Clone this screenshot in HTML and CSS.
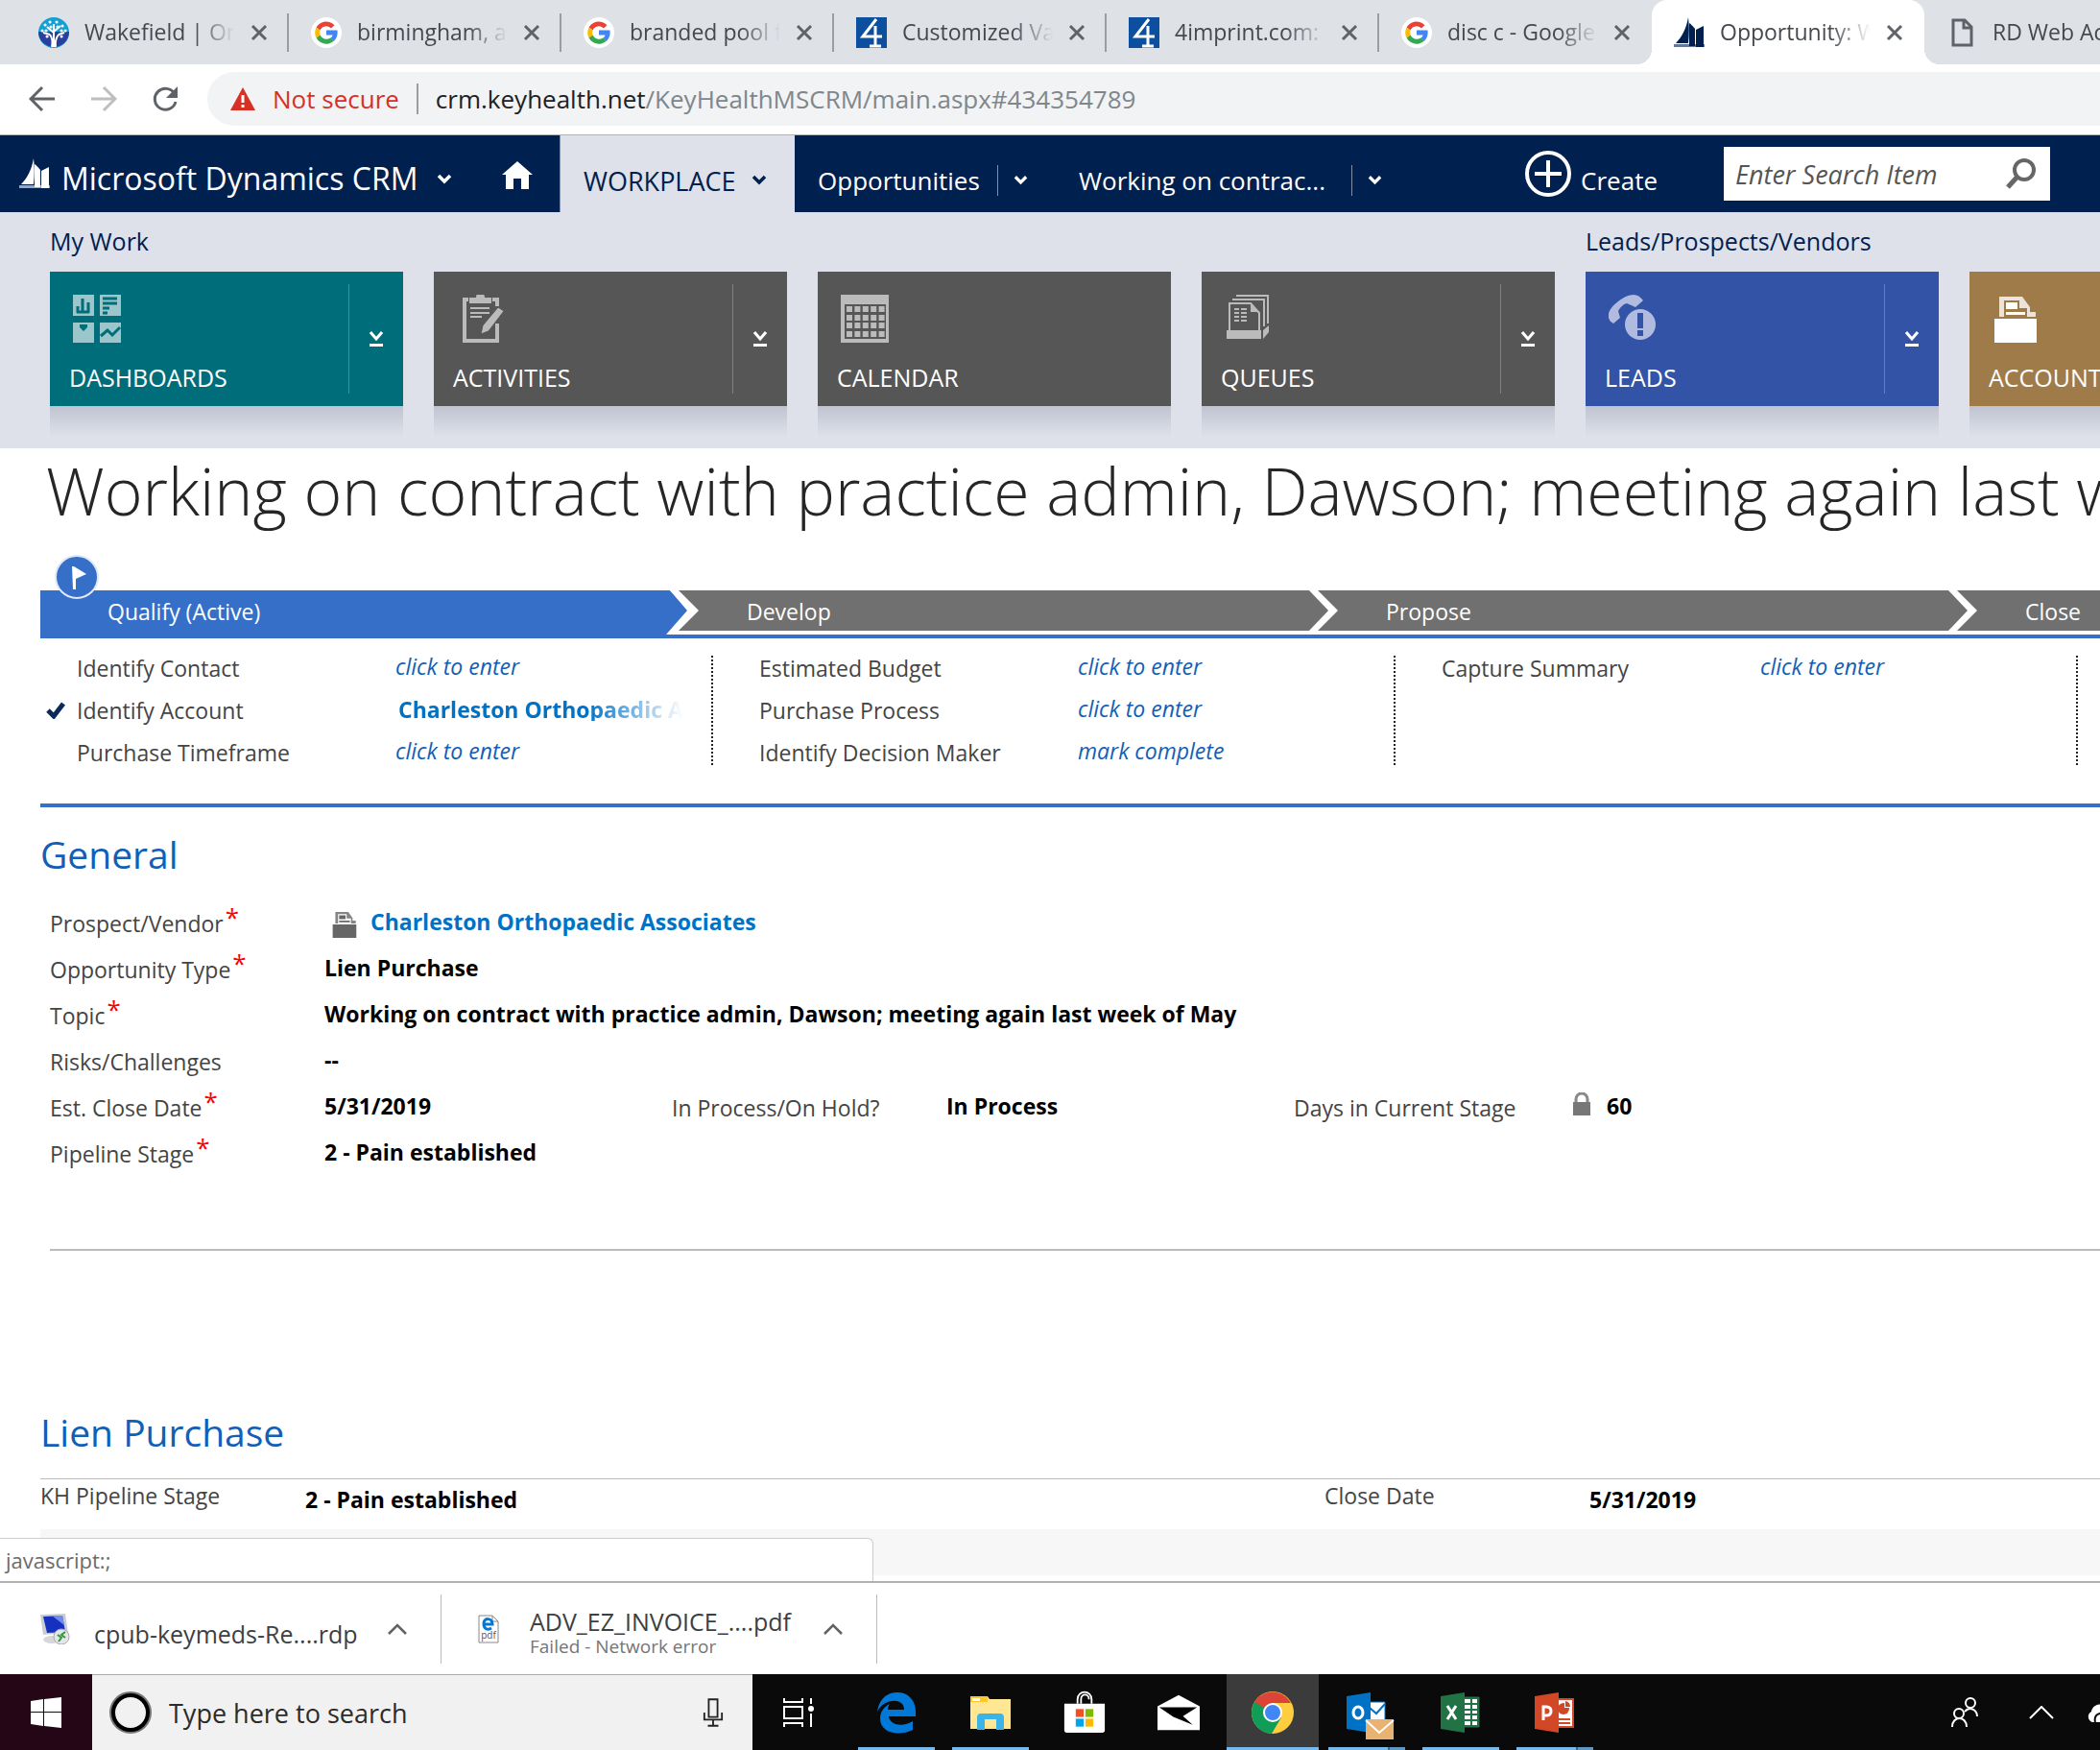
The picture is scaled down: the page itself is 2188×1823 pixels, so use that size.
FILE: index.html
```html
<!DOCTYPE html>
<html lang="en">
<head>
    <meta charset="UTF-8">
    <meta name="viewport" content="width=device-width, initial-scale=1.0">
    <title>Opportunity: Working on contract</title>
    <link rel="stylesheet" href="styles.css">
</head>
<body>
    <!-- shared icons -->
    <svg class="sprite" aria-hidden="true">
        <symbol id="google" viewBox="0 0 32 32">
            <circle cx="16" cy="16" r="16" fill="#fff"/>
            <path d="M24.500 8.200A11.800 11.800 0 0 0 5.600 10.500l4 3.100A6.900 6.900 0 0 1 21 11.500z" fill="#ea4335"/>
            <path d="M5.600 10.500a11.800 11.800 0 0 0 0 11l4-3.100a6.900 6.900 0 0 1 0-4.800z" fill="#fbbc05"/>
            <path d="M5.600 21.500a11.800 11.800 0 0 0 18.400 3l-3.900-3a6.900 6.900 0 0 1-10.500-3.100z" fill="#34a853"/>
            <path d="M16 13.600v4.800h6.600a6 6 0 0 1-2.500 3.300l3.900 3c2.700-2.500 4.200-6.300 3.500-11.100z" fill="#4285f4"/>
        </symbol>
        <symbol id="sails" viewBox="0 0 32 32">
            <path d="M15 0c1 8 1 18 0 27H2C8 21 13 12 15 0z"/>
            <path d="M16 6c4 3 6 6 6 6v18h-6z"/>
            <path d="M23 13l8-4v22h-8z"/>
            <path d="M0 28h32v3H0z" opacity=".6"/>
        </symbol>
        <symbol id="close" viewBox="0 0 18 18">
            <path d="M2 2l14 14M16 2L2 16" fill="none" stroke="#5f6368" stroke-width="3"/>
        </symbol>
        <symbol id="chev" viewBox="0 0 16 12">
            <path d="M2 2l6 6 6-6" fill="none" stroke="currentColor" stroke-width="3.500"/>
        </symbol>
        <symbol id="up" viewBox="0 0 20 12">
            <path d="M1 11l9-9 9 9" fill="none" stroke="currentColor" stroke-width="2.500"/>
        </symbol>
        <symbol id="drop" viewBox="0 0 14 16">
            <path d="M1 1l6 7 6-7" fill="none" stroke="#fff" stroke-width="3"/>
            <path d="M0 13h14v3H0z" fill="#fff"/>
        </symbol>
        <symbol id="account" viewBox="0 0 50 50">
            <path d="M7 23V2h24l8 11v5h6v5z" fill="currentColor" opacity=".8"/>
            <path d="M12 6h16v8h8v9H12z" fill="var(--paper)"/>
            <path d="M14 8h12v7H14zM14 18h20v3H14z" fill="currentColor"/>
            <path d="M2 25h44v25H2z" fill="currentColor"/>
        </symbol>
        <symbol id="four" viewBox="0 0 32 32">
            <path d="M0 0h32v32H0z" fill="#0b4f9e"/>
            <path d="M21 2L7 20h20M20 9v21M14 30h12" fill="none" stroke="#fff" stroke-width="3"/>
        </symbol>
    </svg>

    <nav class="tabs">
        <div class="tab">
            <svg class="favicon" viewBox="0 0 32 32">
                <circle cx="16" cy="16" r="16" fill="#129fd4"/>
                <path d="M0 15h32a16 16 0 0 1-32 0z" fill="#2a3f9d"/>
                <path d="M14 31c1-5 1-9-2-13M18 31c-1-6 0-9 3-13M16 31V7M16 16l-7-6M16 15l7-6M12 18l-7-2M21 18l6-2" fill="none" stroke="#fff" stroke-width="2"/>
                <path d="M7 8h.1M12 5h.1M19 5h.1M25 9h.1M4 14h.1M28 14h.1M8 14h.1M24 14h.1M13 10h.1M20 10h.1M9 20h.1M24 20h.1" stroke="#fff" stroke-width="3" stroke-linecap="round"/>
            </svg>
            <span class="tab-title">Wakefield | Ort</span>
            <button class="tab-close" aria-label="Close"><svg><use href="#close"/></svg></button>
        </div>
        <div class="tab">
            <svg class="favicon"><use href="#google"/></svg>
            <span class="tab-title">birmingham, al</span>
            <button class="tab-close" aria-label="Close"><svg><use href="#close"/></svg></button>
        </div>
        <div class="tab">
            <svg class="favicon"><use href="#google"/></svg>
            <span class="tab-title">branded pool f</span>
            <button class="tab-close" aria-label="Close"><svg><use href="#close"/></svg></button>
        </div>
        <div class="tab">
            <svg class="favicon"><use href="#four"/></svg>
            <span class="tab-title">Customized Va</span>
            <button class="tab-close" aria-label="Close"><svg><use href="#close"/></svg></button>
        </div>
        <div class="tab">
            <svg class="favicon"><use href="#four"/></svg>
            <span class="tab-title">4imprint.com: I</span>
            <button class="tab-close" aria-label="Close"><svg><use href="#close"/></svg></button>
        </div>
        <div class="tab no-line">
            <svg class="favicon"><use href="#google"/></svg>
            <span class="tab-title">disc c - Google</span>
            <button class="tab-close" aria-label="Close"><svg><use href="#close"/></svg></button>
        </div>
        <div class="tab active">
            <svg class="favicon sails"><use href="#sails"/></svg>
            <span class="tab-title">Opportunity: W</span>
            <button class="tab-close" aria-label="Close"><svg><use href="#close"/></svg></button>
        </div>
        <div class="tab">
            <svg class="favicon" viewBox="0 0 32 32">
                <path d="M7 3h12l7 7v19H7zM18 3v8h8" fill="none" stroke="#5f6368" stroke-width="3"/>
            </svg>
            <span class="tab-title">RD Web Acc</span>
        </div>
    </nav>

    <div class="toolbar">
        <button class="tool" aria-label="Back">
            <svg viewBox="0 0 28 28"><path d="M27 14H3M14 2L2 14l12 12" fill="none" stroke="#5f6368" stroke-width="3"/></svg>
        </button>
        <button class="tool" aria-label="Forward">
            <svg viewBox="0 0 28 28"><path d="M1 14h24M14 2l12 12-12 12" fill="none" stroke="#bdbec0" stroke-width="3"/></svg>
        </button>
        <button class="tool" aria-label="Reload">
            <svg viewBox="0 0 28 28"><path d="M24 9a11 11 0 1 0 1 8" fill="none" stroke="#5f6368" stroke-width="3"/><path d="M27 1v12H15z" fill="#5f6368"/></svg>
        </button>
        <div class="address">
            <svg class="warning" viewBox="0 0 26 24"><path d="M13 0l13 24H0z" fill="#d93025"/><path d="M13 8v8M13 18v3" stroke="#fff" stroke-width="3"/></svg>
            <span class="not-secure">Not secure</span>
            <span class="url" role="textbox" aria-label="Address" contenteditable="true" spellcheck="false">crm.keyhealth.net<span class="url-path">/KeyHealthMSCRM/main.aspx#434354789</span></span>
        </div>
    </div>

    <header class="crm-nav">
        <button class="brand">
            <svg class="brand-logo"><use href="#sails"/></svg>
            <span>Microsoft Dynamics CRM</span>
            <svg class="chev"><use href="#chev"/></svg>
        </button>
        <a class="home" href="#" aria-label="Home">
            <svg viewBox="0 0 32 30"><path d="M16 0l16 14h-4v15h-8V18h-8v11H4V14H0z" fill="#fff"/></svg>
        </a>
        <button class="nav-item current">WORKPLACE <svg class="chev"><use href="#chev"/></svg></button>
        <button class="nav-item">Opportunities <svg class="chev split"><use href="#chev"/></svg></button>
        <button class="nav-item record">Working on contrac... <svg class="chev split"><use href="#chev"/></svg></button>
        <button class="create">
            <svg viewBox="0 0 48 48"><circle cx="24" cy="24" r="22" fill="none" stroke="#fff" stroke-width="4"/><path d="M24 10v28M10 24h28" stroke="#fff" stroke-width="4"/></svg>
            <span>Create</span>
        </button>
        <div class="search">
            <input type="text" placeholder="Enter Search Item" aria-label="Search">
            <button aria-label="Go">
                <svg viewBox="0 0 32 32"><circle cx="19" cy="12" r="10" fill="none" stroke="#666" stroke-width="4"/><path d="M12 19L2 30" stroke="#666" stroke-width="5"/></svg>
            </button>
        </div>
    </header>

    <section class="tiles">
        <div class="tile-group">
            <h3>My Work</h3>
            <div class="tile-row">
                <a class="tile teal" href="#">
                    <svg class="tile-icon" viewBox="0 0 50 50">
                        <path d="M0 0h22v22H0zM28 0h22v22H28zM0 29h22v21H0zM28 29h22v21H28z" fill="#9bc6cb"/>
                        <path d="M5 12v7M10 4v15M16 8v11M4 18h13M31 4h15M31 9h15M31 14h7M31 19h5M29 43l7-6 5 5 8-8" fill="none" stroke="#006d7b" stroke-width="3"/>
                        <path d="M7 31h8v3l-4 4-4-4z" fill="#006d7b"/>
                    </svg>
                    <span class="tile-name">DASHBOARDS</span>
                    <span class="tile-drop"><svg><use href="#drop"/></svg></span>
                </a>
                <a class="tile" href="#">
                    <svg class="tile-icon" viewBox="0 0 50 50">
                        <path d="M12 5H8v43h34V30M42 12V5h-5" fill="none" stroke="#bbb" stroke-width="4"/>
                        <path d="M13 9V3h7c0-7 9-7 9 0h7v6z" fill="#bbb"/>
                        <path d="M14 14h20M14 19h20M14 23h12" stroke="#bbb" stroke-width="2"/>
                        <path d="M43 13l6 4-16 21-8 3 2-9z" fill="#bbb" stroke="#565656" stroke-width="1"/>
                    </svg>
                    <span class="tile-name">ACTIVITIES</span>
                    <span class="tile-drop"><svg><use href="#drop"/></svg></span>
                </a>
                <a class="tile" href="#">
                    <svg class="tile-icon" viewBox="0 0 50 50">
                        <path d="M0 0h51v50H0z" fill="#bbb"/>
                        <path d="M4 10h43v36H4z" fill="#565656"/>
                        <path d="M6 15h40M6 24h40M6 32h40M6 41h40" stroke="#bbb" stroke-width="6" stroke-dasharray="6 2.400"/>
                    </svg>
                    <span class="tile-name">CALENDAR</span>
                </a>
                <a class="tile" href="#">
                    <svg class="tile-icon" viewBox="0 0 50 50">
                        <path d="M12 1h33v29M8 5h33v28" fill="none" stroke="#bbb" stroke-width="2"/>
                        <path d="M5 37V9h22l9 10v18" fill="none" stroke="#bbb" stroke-width="2"/>
                        <path d="M27 8v10h9z" fill="#bbb"/>
                        <path d="M10 15h5M17 15h6M10 19h5M17 19h6M10 23h5M17 23h6M10 27h5M17 27h6" stroke="#bbb" stroke-width="2"/>
                        <path d="M2 37h36v9H2zM40 37l6-5v7l-6 7z" fill="#bbb"/>
                    </svg>
                    <span class="tile-name">QUEUES</span>
                    <span class="tile-drop"><svg><use href="#drop"/></svg></span>
                </a>
            </div>
        </div>
        <div class="tile-group">
            <h3>Leads/Prospects/Vendors</h3>
            <div class="tile-row">
                <a class="tile blue" href="#">
                    <svg class="tile-icon" viewBox="0 0 50 50">
                        <path d="M5 30C1 28-1 24 0 20 2 11 17 0 26 0c4 0 7 2 10 6l-8 7-9-4c-4 1-7 4-9 8l2 7z" fill="#b0bbdf"/>
                        <circle cx="33" cy="31" r="16" fill="#b0bbdf"/>
                        <path d="M33 19v16M33 37v6" stroke="#3353a6" stroke-width="6"/>
                    </svg>
                    <span class="tile-name">LEADS</span>
                    <span class="tile-drop"><svg><use href="#drop"/></svg></span>
                </a>
                <a class="tile gold" href="#">
                    <svg class="tile-icon"><use href="#account"/></svg>
                    <span class="tile-name">ACCOUNTS</span>
                    <span class="tile-drop"><svg><use href="#drop"/></svg></span>
                </a>
            </div>
        </div>
    </section>

    <main class="record-page">
        <h1>Working on contract with practice admin, Dawson; meeting again last week of May</h1>

        <div class="process">
            <div class="flag">
                <svg viewBox="0 0 46 46"><circle cx="23" cy="23" r="22" fill="#356fc8" stroke="#dfe8f6" stroke-width="2"/><path d="M18 12h2l13 8-11 5v11h-3z" fill="#fff"/></svg>
            </div>
            <div class="stages">
                <div class="stage now">Qualify (Active)</div>
                <svg class="arrow first" viewBox="0 0 30 46"><path d="M8 0h22v42H8z" fill="#707070"/><path d="M0 0l20 21L0 46z" fill="#356fc8"/><path d="M0 0h9l21 21L9 42h21v4H-4L18 21z" fill="#fff"/></svg>
                <div class="stage">Develop</div>
                <svg class="arrow" viewBox="0 0 30 42"><path d="M0 0h30v42H0z" fill="#707070"/><path d="M0 0h9l21 21L9 42H0l20-21z" fill="#fff"/></svg>
                <div class="stage">Propose</div>
                <svg class="arrow" viewBox="0 0 30 42"><path d="M0 0h30v42H0z" fill="#707070"/><path d="M0 0h9l21 21L9 42H0l20-21z" fill="#fff"/></svg>
                <div class="stage">Close</div>
            </div>
            <div class="steps">
                <dl class="step-col">
                    <dt>Identify Contact</dt><dd><button>click to enter</button></dd>
                    <dt class="done"><svg class="check" viewBox="0 0 20 18"><path d="M2 9l6 6L18 2" fill="none" stroke="#0a2a5c" stroke-width="5"/></svg>Identify Account</dt><dd><a class="lookup" href="#">Charleston Orthopaedic As</a></dd>
                    <dt>Purchase Timeframe</dt><dd><button>click to enter</button></dd>
                </dl>
                <dl class="step-col">
                    <dt>Estimated Budget</dt><dd><button>click to enter</button></dd>
                    <dt>Purchase Process</dt><dd><button>click to enter</button></dd>
                    <dt>Identify Decision Maker</dt><dd><button>mark complete</button></dd>
                </dl>
                <dl class="step-col">
                    <dt>Capture Summary</dt><dd><button>click to enter</button></dd>
                </dl>
            </div>
        </div>

        <h2>General</h2>
        <dl class="fields">
            <div class="field"><dt>Prospect/Vendor<i>*</i></dt><dd class="with-icon"><svg class="account-icon"><use href="#account"/></svg><a href="#">Charleston Orthopaedic Associates</a></dd></div>
            <div class="field"><dt>Opportunity Type<i>*</i></dt><dd>Lien Purchase</dd></div>
            <div class="field"><dt>Topic<i>*</i></dt><dd>Working on contract with practice admin, Dawson; meeting again last week of May</dd></div>
            <div class="field"><dt>Risks/Challenges</dt><dd>--</dd></div>
            <div class="field">
                <dt>Est. Close Date<i>*</i></dt><dd>5/31/2019</dd>
                <dt>In Process/On Hold?</dt><dd>In Process</dd>
                <dt>Days in Current Stage</dt><dd class="locked"><svg class="lock" viewBox="0 0 20 24"><path d="M4 10V7a6 6 0 0 1 12 0v3" fill="none" stroke="#888" stroke-width="3"/><path d="M1 10h18v14H1z" fill="#777"/></svg>60</dd>
            </div>
            <div class="field"><dt>Pipeline Stage<i>*</i></dt><dd>2 - Pain established</dd></div>
        </dl>
        <hr>

        <h2 class="lien">Lien Purchase</h2>
        <dl class="lien-row">
            <dt>KH Pipeline Stage</dt><dd>2 - Pain established</dd>
            <dt>Close Date</dt><dd>5/31/2019</dd>
        </dl>
        <div class="strip"></div>
        <div class="status">javascript:;</div>
    </main>

    <div class="downloads">
        <div class="download">
            <svg class="file-icon" viewBox="0 0 32 32">
                <path d="M0 1l26-1 3 20-26 2z" fill="#c9ccd2"/>
                <path d="M3 3l20-1 3 17-19 1z" fill="#1630c0"/>
                <path d="M12 2l11 0 2 10z" fill="#6f8bf0"/>
                <ellipse cx="12" cy="27" rx="9" ry="4" fill="#d5d7da"/>
                <circle cx="22" cy="24" r="8" fill="#e4e6e8" stroke="#aaa"/>
                <path d="M18 22l4 3-3 4M26 19l-4 3 4 3" fill="none" stroke="#2f9a3a" stroke-width="2"/>
            </svg>
            <div class="file-name single">cpub-keymeds-Re....rdp</div>
            <button aria-label="More"><svg><use href="#up"/></svg></button>
        </div>
        <div class="download">
            <svg class="file-icon" viewBox="0 0 32 32">
                <path d="M6 2h14l6 6v22H6z" fill="#fff" stroke="#888"/>
                <path d="M20 2v6h6" fill="none" stroke="#888"/>
                <path d="M11 11h9c0-7-9-7-9-1 0 7 5 7 8 5" fill="none" stroke="#0078d7" stroke-width="3"/>
                <text x="16" y="26" class="icon-pdf">pdf</text>
            </svg>
            <div class="file-name">ADV_EZ_INVOICE_....pdf<small>Failed - Network error</small></div>
            <button aria-label="More"><svg><use href="#up"/></svg></button>
        </div>
    </div>

    <footer class="taskbar">
        <button class="start" aria-label="Start">
            <svg viewBox="0 0 32 32"><path d="M0 4l13-2v13H0zM14 2l18-2v15H14zM0 16h13v14L0 28zM14 16h18v16l-18-2z" fill="#fff"/></svg>
        </button>
        <div class="cortana">
            <svg class="ring" viewBox="0 0 44 44"><circle cx="22" cy="22" r="20" fill="none" stroke="#777" stroke-width="4"/><circle cx="22" cy="22" r="18" fill="none" stroke="#000" stroke-width="4"/></svg>
            <input type="text" placeholder="Type here to search" aria-label="Type here to search">
            <svg class="mic" viewBox="0 0 24 32"><path d="M7 1h10v20H7zM2 16v8h20v-8M12 24v7M6 31h12" fill="none" stroke="#222" stroke-width="2"/></svg>
        </div>
        <button class="app view" aria-label="Task view">
            <svg viewBox="0 0 32 32"><path d="M1 1v4h19V1M1 10h19v12H1zM1 31v-4h19v4M29 1v6M29 17v14" fill="none" stroke="#fff" stroke-width="2"/><circle cx="29" cy="12" r="3" fill="#fff"/></svg>
        </button>
        <button class="app open" aria-label="Edge">
            <svg viewBox="0 0 44 44"><path d="M2 21C4 8 12 1 23 1c12 0 19 9 19 20v5H14c1 10 16 11 25 5v9C25 47 5 44 5 28c0-7 4-12 10-15-2 3-2 5-2 6h17c0-13-21-12-28 2z" fill="#0078d7"/></svg>
        </button>
        <button class="app open" aria-label="File Explorer">
            <svg viewBox="0 0 44 44"><path d="M1 5h18l2 3h22v31H1z" fill="#ffe794"/><path d="M1 5h18v6H1z" fill="#fcc62c"/><path d="M3 7h8v3H3z" fill="#fff"/><path d="M8 40V27q0-4 4-4h20q4 0 4 4v13h-8V29H16v11z" fill="#3db4e8"/></svg>
        </button>
        <button class="app" aria-label="Store">
            <svg viewBox="0 0 48 48"><path d="M16 14V9c0-11 16-11 16 0v5M20 14V9c0-7 9-7 9 0" fill="none" stroke="#fff" stroke-width="2"/><path d="M1 14h46v30q0 3-3 3H4q-3 0-3-3z" fill="#fff"/><path d="M14 20h9v9h-9z" fill="#f25022"/><path d="M25 20h9v9h-9z" fill="#7fba00"/><path d="M14 31h9v9h-9z" fill="#00a4ef"/><path d="M25 31h9v9h-9z" fill="#ffb900"/></svg>
        </button>
        <button class="app" aria-label="Mail">
            <svg viewBox="0 0 48 44"><path d="M0 15L24 2l24 13v27H0z" fill="#fff"/><path d="M2 16h43L29 26l11 10-22-9z" fill="#000"/></svg>
        </button>
        <button class="app open focused" aria-label="Chrome">
            <svg viewBox="0 0 44 44"><circle cx="22" cy="22" r="22" fill="#ffcd40"/><path d="M22 12h19A22 22 0 0 0 3 11l9 16z" fill="#db4437"/><path d="M3 11a22 22 0 0 0 18 33l10-17-9-5z" fill="#0f9d58"/><path d="M3 11l10 16 9-5v-10z" fill="#db4437" opacity=".01"/><circle cx="22" cy="22" r="10" fill="#fff"/><circle cx="22" cy="22" r="8" fill="#4285f4"/></svg>
        </button>
        <button class="app open many" aria-label="Outlook">
            <svg viewBox="0 0 44 44"><path d="M24 11h17v20H24z" fill="#fff" stroke="#0072c6" stroke-width="1"/><path d="M25 17l7 6 9-10" fill="none" stroke="#0072c6" stroke-width="2"/><path d="M1 5l25-4v42L1 39z" fill="#0072c6"/><ellipse cx="13" cy="22" rx="5" ry="6" fill="none" stroke="#fff" stroke-width="3"/><path d="M21 29h29v21H21z" fill="#e8b272"/><path d="M21 30l14 13 15-13" fill="none" stroke="#fff" stroke-width="2"/></svg>
        </button>
        <button class="app open" aria-label="Excel">
            <svg viewBox="0 0 44 44"><path d="M24 6h17v31H24z" fill="#fff" stroke="#217346" stroke-width="1"/><path d="M25 13h14M25 19h14M25 24h14M25 30h14M33 7v29M25 7h15v29H25" fill="none" stroke="#217346" stroke-width="2"/><path d="M1 5l25-4v42L1 39z" fill="#217346"/><path d="M8 15l9 14M17 15L8 29" stroke="#fff" stroke-width="3"/></svg>
        </button>
        <button class="app open many" aria-label="PowerPoint">
            <svg viewBox="0 0 44 44"><path d="M24 8h17v29H24z" fill="#fff" stroke="#d24726" stroke-width="2"/><circle cx="31" cy="18" r="6" fill="#d24726"/><path d="M32 17V9h7v8z" fill="#fff"/><path d="M33 16v-6q5 1 5 6zM26 28h12v2H26zM26 32h12v2H26z" fill="#d24726"/><path d="M1 5l25-4v42L1 39z" fill="#d24726"/><path d="M10 30V16h3q5 0 5 4.500T13 25h-3" fill="none" stroke="#fff" stroke-width="3"/></svg>
        </button>
        <div class="tray">
            <svg class="people" viewBox="0 0 28 32"><circle cx="20" cy="6" r="5"/><circle cx="8" cy="17" r="5"/><path d="M1 31c0-12 15-12 15 0M14 15c5-6 13-2 13 5"/></svg>
            <svg class="tray-up" viewBox="0 0 26 14"><path d="M1 13L13 1l12 12"/></svg>
            <svg class="cloud" viewBox="0 0 40 20"><path d="M6 20a6 6 0 0 1-1-11C6 2 15-1 19 4c8-3 12 3 12 7 8 0 8 9 2 9z" fill="#fff"/><path d="M9 20c-2-9 7-11 10-7" fill="none" stroke="#0a0a0a" stroke-width="2"/></svg>
        </div>
    </footer>
</body>
</html>
```

FILE: styles.css
```css
* {
    box-sizing: border-box;
}
html {
    overflow: hidden;
}
body {
    margin: 0;
    height: 100vh;
    display: flex;
    flex-direction: column;
    overflow: hidden;
    background: #fff;
    color: #444;
    font-family: "Open Sans", "Noto Sans", sans-serif;
    font-size: 23px;
}
h1, h2, h3, dl, dt, dd {
    margin: 0;
    font-weight: normal;
}
a {
    text-decoration: none;
}
button {
    padding: 0;
    border: none;
    background: none;
    color: inherit;
    font: inherit;
    cursor: pointer;
}
input {
    border: none;
    background: none;
    font: inherit;
    outline: none;
}
svg {
    display: block;
    flex: none;
}
.sprite {
    position: absolute;
    width: 0;
    height: 0;
}

/* browser tabs */
.tabs {
    flex: none;
    display: flex;
    height: 67px;
    padding-left: 17px;
    overflow: hidden;
    background: #dee1e6;
}
.tab {
    flex: none;
    display: flex;
    align-items: center;
    width: 284px;
    padding-left: 23px;
    background: linear-gradient(#9a9da2, #9a9da2) right center / 2px 40px no-repeat;
}
.tab.no-line,
.tab:last-child {
    background: none;
}
.tab.active {
    position: relative;
    background: #fff;
    border-radius: 16px 16px 0 0;
}
.tab.active::before,
.tab.active::after {
    content: "";
    position: absolute;
    bottom: 0;
    width: 16px;
    height: 16px;
}
.tab.active::before {
    right: 100%;
    background: radial-gradient(circle at 0 0, transparent 16px, #fff 16px);
}
.tab.active::after {
    left: 100%;
    background: radial-gradient(circle at 100% 0, transparent 16px, #fff 16px);
}
.favicon {
    width: 32px;
    height: 32px;
}
.sails {
    fill: #002050;
}
.tab-title {
    width: 157px;
    margin: 0 16px;
    padding-bottom: 2px;
    overflow: hidden;
    white-space: nowrap;
    color: #45484d;
    -webkit-mask-image: linear-gradient(to right, #000 115px, transparent);
    mask-image: linear-gradient(to right, #000 115px, transparent);
}
.tab-close svg {
    width: 18px;
    height: 18px;
}

/* address bar */
.toolbar {
    flex: none;
    display: flex;
    align-items: center;
    gap: 36px;
    height: 74px;
    padding: 0 0 2px 30px;
    border-bottom: 1px solid #b0b2b5;
}
.tool svg {
    width: 28px;
    height: 28px;
}
.address {
    flex: 1;
    display: flex;
    align-items: center;
    height: 56px;
    margin-left: -6px;
    padding-left: 24px;
    border-radius: 28px 0 0 28px;
    background: #f1f3f4;
    font-size: 26px;
}
.warning {
    width: 26px;
    height: 24px;
}
.not-secure {
    margin-left: 18px;
    padding-right: 18px;
    border-right: 2px solid #9a9da2;
    color: #d93025;
    line-height: 32px;
}
.url {
    margin-left: 18px;
    color: #202124;
    outline: none;
}
.url-path {
    color: #80868b;
}

/* CRM navigation */
.crm-nav {
    flex: none;
    display: flex;
    height: 80px;
    padding-left: 20px;
    background: #002050;
    color: #fff;
    font-size: 26px;
    white-space: nowrap;
}
.brand {
    display: flex;
    align-items: center;
    gap: 12px;
    width: 503px;
    padding-top: 8px;
    font-size: 32px;
}
.brand-logo {
    width: 32px;
    height: 32px;
    margin-bottom: 8px;
    fill: #fff;
}
.chev {
    width: 16px;
    height: 12px;
}
.brand .chev {
    margin: 4px 0 0 8px;
}
.home {
    width: 61px;
    padding-top: 27px;
    border-right: 1px solid #8190a8;
}
.home svg {
    width: 32px;
    height: 30px;
}
.nav-item {
    flex: none;
    display: flex;
    align-items: center;
    justify-content: space-between;
    width: 272px;
    padding: 14px 29px 0 24px;
}
.nav-item.current {
    width: 244px;
    background: #dee1e9;
    color: #002050;
    font-size: 27px;
}
.nav-item.record {
    width: 369px;
}
.chev.split {
    width: 32px;
    height: 32px;
    padding: 10px 0 10px 16px;
    border-left: 1px solid #8190a8;
}
.create {
    display: flex;
    align-items: center;
    gap: 10px;
    margin-left: auto;
}
.create svg {
    width: 48px;
    height: 48px;
}
.create span {
    padding-top: 14px;
}
.search {
    display: flex;
    align-items: center;
    width: 340px;
    height: 56px;
    margin: 12px 52px 0 69px;
    padding: 0 14px 0 12px;
    background: #fff;
}
.search input {
    flex: 1;
    min-width: 0;
    padding: 0;
    font-size: 27px;
    font-style: italic;
}
.search input::placeholder {
    color: #555;
    opacity: 1;
}
.search svg {
    width: 32px;
    height: 32px;
}

/* tiles */
.tiles {
    flex: none;
    display: flex;
    gap: 32px;
    height: 246px;
    padding-left: 52px;
    overflow: hidden;
    background: #dee1e9;
}
.tiles h3 {
    padding: 12px 0 14px;
    color: #002050;
    font-size: 25px;
    line-height: 36px;
}
.tile-row {
    display: flex;
    gap: 32px;
}
.tile {
    --paper: #a07b4a;
    position: relative;
    flex: none;
    width: 368px;
    height: 140px;
    padding: 24px 0 0 20px;
    background: #565656;
    color: #fff;
    font-size: 25px;
}
.tile::after {
    content: "";
    position: absolute;
    top: 100%;
    left: 0;
    width: 100%;
    height: 32px;
    background: linear-gradient(#c0c4d1, #dee1e9);
}
.teal {
    background: #006d7b;
}
.blue {
    background: #3353a6;
}
.gold {
    background: #a07b4a;
}
.tile-icon {
    width: 50px;
    height: 50px;
    margin-left: 4px;
}
.tile-name {
    display: block;
    padding-top: 20px;
    line-height: 32px;
}
.tile-drop {
    position: absolute;
    top: 13px;
    right: 0;
    width: 57px;
    height: 114px;
    padding: 49px 0 0 21px;
    border-left: 1px solid rgba(255, 255, 255, 0.25);
}
.tile-drop svg {
    width: 14px;
    height: 16px;
}

/* record */
.record-page {
    position: relative;
    flex: 1;
    min-height: 0;
    overflow: hidden;
}
h1 {
    padding-left: 48px;
    color: #262626;
    font-size: 68px;
    font-weight: 300;
    line-height: 88px;
    white-space: nowrap;
}
.process {
    position: relative;
    margin: 60px 0 0 42px;
    border-bottom: 4px solid #356fc8;
}
.flag {
    position: absolute;
    top: -37px;
    left: 15px;
}
.flag svg {
    width: 46px;
    height: 46px;
}
.stages {
    display: flex;
    align-items: flex-start;
    height: 50px;
    overflow: hidden;
    border-bottom: 4px solid #356fc8;
    color: #fff;
    line-height: 44px;
}
.stage {
    flex: none;
    width: 636px;
    height: 42px;
    padding-left: 50px;
    background: #707070;
}
.stage.now {
    width: 656px;
    height: 46px;
    padding-left: 70px;
    background: #356fc8;
}
.arrow {
    width: 30px;
    height: 42px;
}
.arrow.first {
    height: 46px;
    overflow: visible;
}
.stage:last-child {
    flex: 1 0 auto;
    width: auto;
}
.steps {
    display: flex;
    margin-left: -10px;
    padding: 18px 0 40px;
}
.step-col {
    flex: none;
    display: grid;
    grid-template-columns: 332px 1fr;
    grid-auto-rows: 26px;
    row-gap: 18px;
    width: 711px;
    padding-left: 48px;
    border-right: 2px dotted #222;
    line-height: 26px;
}
.step-col dd {
    line-height: 22px;
}
.step-col button {
    color: #1160b7;
    font-style: italic;
    line-height: 22px;
}
.done {
    position: relative;
}
.check {
    position: absolute;
    top: 4px;
    left: -32px;
    width: 20px;
    height: 18px;
}
.lookup {
    display: block;
    width: 302px;
    overflow: hidden;
    padding-left: 3px;
    color: #0072c6;
    font-weight: bold;
    line-height: 24px;
    white-space: nowrap;
    -webkit-mask-image: linear-gradient(to right, #000 200px, transparent 300px);
    mask-image: linear-gradient(to right, #000 200px, transparent 300px);
}
h2 {
    margin: 23px 0 22px;
    padding-left: 42px;
    color: #1160b7;
    font-size: 39px;
    line-height: 52px;
}
.field {
    display: flex;
    height: 48px;
    padding-left: 52px;
    white-space: nowrap;
}
.field dt {
    flex: none;
    width: 286px;
    line-height: 48px;
}
.field dt i {
    margin-left: 2px;
    color: #f00;
    font-size: 26px;
    font-style: normal;
    line-height: 0;
    vertical-align: 6px;
}
.field dd {
    flex: none;
    width: 362px;
    color: #000;
    font-weight: bold;
    line-height: 44px;
}
.with-icon {
    display: flex;
    gap: 12px;
    padding-left: 7px;
}
.with-icon a {
    color: #0072c6;
}
.account-icon {
    --paper: #fff;
    width: 29px;
    height: 28px;
    margin-top: 11px;
    color: #666;
}
.locked {
    display: flex;
    gap: 16px;
    padding-left: 4px;
}
.lock {
    width: 20px;
    height: 24px;
    margin-top: 8px;
}
hr {
    height: 2px;
    margin: 75px 0 0 52px;
    border: none;
    background: #bbb;
}
.lien {
    margin-top: 163px;
}
.lien-row {
    display: flex;
    height: 53px;
    margin-left: 42px;
    border-top: 1px solid #bbb;
}
.lien-row dt {
    flex: none;
    width: 276px;
    line-height: 34px;
}
.lien-row dd {
    flex: none;
    width: 1062px;
    color: #000;
    font-weight: bold;
    line-height: 42px;
}
.lien-row dd:last-child {
    width: auto;
}
.strip {
    height: 48px;
    margin-left: 42px;
    background: #f7f7f7;
}
.status {
    position: absolute;
    bottom: 0;
    left: 0;
    width: 910px;
    height: 45px;
    padding-left: 6px;
    border: 1px solid #ccc;
    border-width: 1px 1px 0 0;
    border-radius: 0 6px 0 0;
    background: #fff;
    color: #6b6b6b;
    font-size: 22px;
    line-height: 44px;
}

/* download shelf */
.downloads {
    flex: none;
    display: flex;
    height: 97px;
    padding-top: 12px;
    border-top: 2px solid #b0b0b0;
    background: #fff;
}
.download {
    display: flex;
    align-items: center;
    height: 72px;
    padding: 0 35px 0 42px;
    border-right: 1px solid #bbb;
}
.download + .download {
    padding-left: 33px;
}
.file-icon {
    width: 32px;
    height: 32px;
    margin-right: 24px;
}
.download + .download .file-icon {
    margin-right: 27px;
}
.icon-pdf {
    fill: #555;
    font-size: 10px;
    text-anchor: middle;
}
.file-name {
    width: 306px;
    padding-top: 6px;
    color: #3c4043;
    font-size: 25px;
    line-height: 30px;
}
.file-name.single {
    padding-top: 10px;
}
.file-name small {
    display: block;
    color: #757575;
    font-size: 19px;
    line-height: 22px;
}
.download button {
    color: #5f6368;
}
.download button svg {
    width: 20px;
    height: 12px;
}

/* taskbar */
.taskbar {
    flex: none;
    display: flex;
    height: 79px;
    overflow: hidden;
    background: #0a0a0a;
}
.start {
    width: 96px;
    padding-left: 32px;
    background: #250617;
}
.start svg {
    width: 32px;
    height: 32px;
}
.cortana {
    display: flex;
    align-items: center;
    width: 688px;
    padding: 0 30px 0 18px;
    border-top: 1px solid #aaa;
    background: #f1f1f1;
}
.ring {
    width: 44px;
    height: 44px;
}
.cortana input {
    flex: 1;
    margin-left: 18px;
    padding: 0;
    font-size: 27px;
}
.cortana input::placeholder {
    color: #2b2b2b;
    opacity: 1;
}
.mic {
    width: 22px;
    height: 34px;
}
.app {
    flex: none;
    display: flex;
    align-items: center;
    justify-content: center;
    width: 96px;
    margin-right: 2px;
}
.app svg {
    width: 44px;
    height: 44px;
    overflow: visible;
}
.app.view {
    margin-right: 6px;
}
.app.view svg {
    width: 32px;
    height: 32px;
}
.app.open {
    background: linear-gradient(#76b9ed, #76b9ed) center bottom / 80px 3px no-repeat;
}
.app.focused {
    background: linear-gradient(#76b9ed, #76b9ed) center bottom / 96px 3px no-repeat #3b3b3b;
}
.app.many {
    background-image: linear-gradient(to right, #76b9ed 62px, #3f6584 62px, #3f6584 64px, #5f97c4 64px);
}
.tray {
    display: flex;
    align-items: center;
    gap: 53px;
    margin-left: auto;
    margin-right: -26px;
    fill: none;
    stroke: #fff;
    stroke-width: 2;
}
.people {
    width: 28px;
    height: 32px;
}
.tray-up {
    width: 26px;
    height: 14px;
}
.cloud {
    width: 40px;
    height: 20px;
    margin-left: -19px;
    stroke: none;
}
```
